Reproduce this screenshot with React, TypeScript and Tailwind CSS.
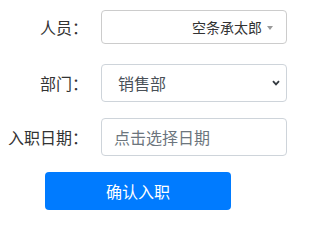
import React from "react";

const font = { fontFamily: '"Noto Sans CJK SC", "Noto Sans", sans-serif' };

export default function App() {
  return (
    <div className="w-[298px] h-[224px] bg-white pt-[10px] font-['Noto_Sans_CJK_SC',sans-serif]" style={font}>
      <div className="flex items-center h-[34px]">
        <div className="w-[88px] text-right text-[16px] leading-none text-[#333333]">人员：</div>
        <div className="ml-[13px] w-[186px] h-[34px] border border-[#cccccc] rounded-[4px] flex items-center justify-end pr-[13px]">
          <span className="text-[14px] leading-none text-[#333333]">空条承太郎</span>
          <span className="ml-[5px] mt-[1px] w-0 h-0 border-l-[3px] border-r-[3px] border-t-[4px] border-l-transparent border-r-transparent border-t-[#999999]"></span>
        </div>
      </div>
      <div className="flex items-center h-[38px] mt-[20px]">
        <div className="w-[88px] text-right text-[16px] leading-none text-[#333333]">部门：</div>
        <div className="ml-[13px] w-[186px] h-[38px] border border-[#ced4da] rounded-[4px] flex items-center pl-[16px] pr-[5px]">
          <span className="flex-1 text-[16px] leading-none text-[#495057]">销售部</span>
          <svg width="8" height="6" viewBox="0 0 8 6" className="mr-[1px]">
            <path d="M1 1.2 L4 4.4 L7 1.2" stroke="#343a40" strokeWidth="1.8" fill="none" />
          </svg>
        </div>
      </div>
      <div className="flex items-center h-[38px] mt-[16px]">
        <div className="w-[88px] text-right text-[16px] leading-none text-[#333333]">入职日期：</div>
        <div className="ml-[13px] w-[186px] h-[38px] border border-[#ced4da] rounded-[4px] flex items-center pl-[12px]">
          <span className="text-[16px] leading-none text-[#6c757d]">点击选择日期</span>
        </div>
      </div>
      <div className="mt-[16px] ml-[45px] w-[186px] h-[38px] bg-[#007bff] rounded-[4px] flex items-center justify-center">
        <span className="text-[16px] leading-none text-white">确认入职</span>
      </div>
    </div>
  );
}
